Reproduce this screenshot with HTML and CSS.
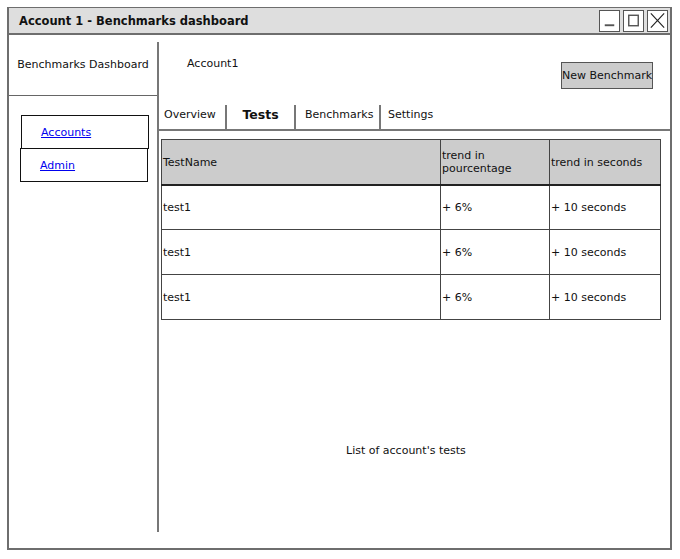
FILE: index.html
```html
<!DOCTYPE html>
<html>
<head>
<meta charset="utf-8">
<link rel="stylesheet" href="styles.css">
</head>
<body>
<div class="window">
  <div class="titlebar">
    <span class="title">Account 1 - Benchmarks dashboard</span>
    <div class="winbtns">
      <span class="wbtn"><svg width="20" height="21" viewBox="0 0 20 21"><line x1="5" y1="15.5" x2="15" y2="15.5" stroke="#555" stroke-width="2"/></svg></span>
      <span class="wbtn"><svg width="20" height="21" viewBox="0 0 20 21"><rect x="5" y="5" width="10" height="11" fill="none" stroke="#555" stroke-width="1.5"/></svg></span>
      <span class="wbtn"><svg width="20" height="21" viewBox="0 0 20 21"><path d="M3 3 L17 18 M17 3 L3 18" stroke="#222" stroke-width="1.2"/></svg></span>
    </div>
  </div>
  <div class="body">
    <div class="sidebar">
      <div class="side-head">Benchmarks Dashboard</div>
      <nav class="nav">
        <div class="navbox"><a href="#">Accounts</a></div>
        <div class="navbox second"><a href="#">Admin</a></div>
      </nav>
    </div>
    <div class="divider"></div>
    <div class="main">
      <div class="main-head">
        <span class="account">Account1</span>
        <span class="newbtn">New Benchmark</span>
      </div>
      <div class="tabs">
        <span class="tab t1">Overview</span>
        <span class="tab t2 active">Tests</span>
        <span class="tab t3">Benchmarks</span>
        <span class="tab t4">Settings</span>
      </div>
      <table class="grid">
        <thead>
          <tr><th class="c1">TestName</th><th class="c2">trend in<br>pourcentage</th><th class="c3">trend in seconds</th></tr>
        </thead>
        <tbody>
          <tr><td>test1</td><td>+ 6%</td><td>+ 10 seconds</td></tr>
          <tr><td>test1</td><td>+ 6%</td><td>+ 10 seconds</td></tr>
          <tr><td>test1</td><td>+ 6%</td><td>+ 10 seconds</td></tr>
        </tbody>
      </table>
      <div class="caption">List of account's tests</div>
    </div>
  </div>
</div>
</body>
</html>
```
FILE: styles.css
```css
* { box-sizing: border-box; }
html, body { margin: 0; padding: 0; background: #fff; }
body {
  font-family: "Comic Sans MS", "DejaVu Sans", sans-serif;
  font-size: 11px;
  color: #111;
}
.window {
  margin: 7px 0 0 7px;
  width: 665px;
  height: 543px;
  border: 2px solid #6e6e6e;
  border-top-width: 1px;
  display: flex;
  flex-direction: column;
}
.titlebar {
  height: 27px;
  background: #dedede;
  border-bottom: 2px solid #6e6e6e;
  display: flex;
  align-items: center;
  justify-content: space-between;
  padding: 0 2px 0 10px;
}
.title { font-weight: bold; font-size: 11.5px; }
.winbtns { display: flex; gap: 3px; }
.wbtn {
  width: 21px; height: 22px;
  border: 1.5px solid #555;
  background: #fff;
  display: flex; align-items: center; justify-content: center;
}
.wbtn svg { display: block; }
.body { flex: 1; display: flex; }
.sidebar { width: 148px; display: flex; flex-direction: column; }
.side-head {
  height: 61px;
  border-bottom: 1.5px solid #666;
  display: flex; align-items: center; justify-content: center;
  padding-bottom: 2px;
}
.nav { padding: 19px 0 0 12px; }
.navbox {
  width: 128px; height: 34px;
  border: 1.2px solid #111;
  display: flex; align-items: center;
  padding-left: 19px;
}
.navbox.second { margin-left: -1px; margin-top: -1px; }
.navbox a { color: #0000ee; text-decoration: underline; }
.divider { width: 2px; background: #777; margin: 7px 0 16px; }
.main { flex: 1; display: flex; flex-direction: column; }
.main-head { height: 70px; position: relative; }
.account { position: absolute; left: 28px; top: 22px; }
.newbtn {
  position: absolute; left: 402px; top: 27px;
  width: 92px; height: 27px;
  border: 1.5px solid #555;
  background: #cccccc;
  display: flex; align-items: center; justify-content: center;
  white-space: nowrap;
}
.tabs {
  height: 26px;
  border-bottom: 2px solid #777;
  display: flex;
}
.tab { display: flex; align-items: flex-start; padding-top: 3px; white-space: nowrap; }
.t1 { width: 68px; padding-left: 5px; border-right: 2px solid #777; }
.t2 { width: 69px; justify-content: center; border-right: 2px solid #777; font-weight: bold; font-size: 12.5px; padding-top: 2px; }
.t3 { width: 85px; padding-left: 9px; border-right: 2px solid #777; }
.t4 { padding-left: 7px; }
.grid {
  margin: 8px 0 0 2px;
  width: 500px;
  border-collapse: collapse;
  border: 1.5px solid #222;
}
.grid th, .grid td {
  text-align: left; font-weight: normal;
  border: 1px solid #444;
  padding: 0 0 0 1px;
  vertical-align: middle;
}
.grid thead th {
  background: #cccccc; height: 45px;
  border-bottom: 2px solid #222;
  line-height: 12.5px;
  padding-top: 2px;
}
.grid td { height: 45px; }
.c1 { width: 279px; }
.c2 { width: 109px; }
.caption { margin-top: 124px; padding-left: 187px; }
```
